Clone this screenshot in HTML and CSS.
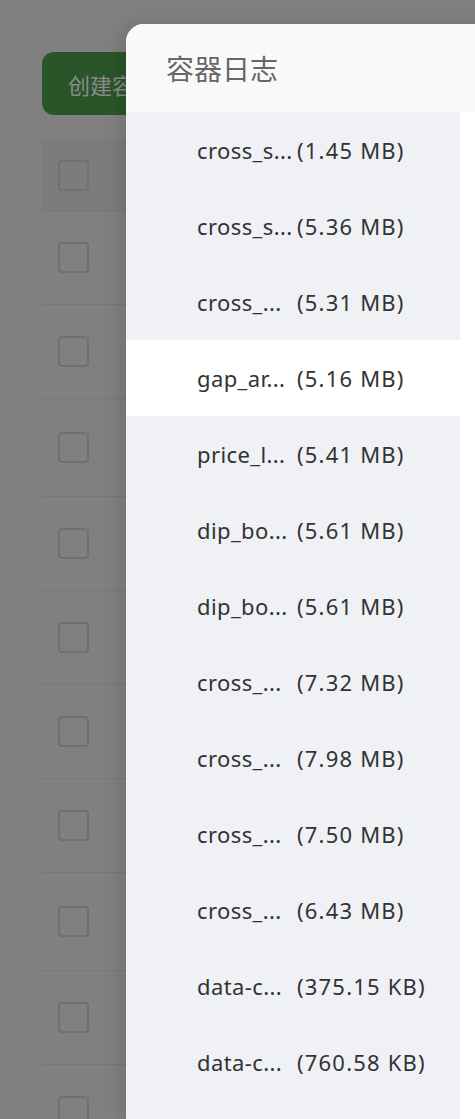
FILE: index.html
```html
<!DOCTYPE html>
<html lang="zh">
<head>
<meta charset="utf-8">
<link rel="stylesheet" href="styles.css">
</head>
<body>
<div class="page">
  <div class="toolbar">
    <button class="btn-create">创建容器</button>
  </div>
  <div class="table">
    <div class="trow thead"><span class="cb"></span></div>
    <div class="trow"><span class="cb"></span></div>
    <div class="trow"><span class="cb"></span></div>
    <div class="trow tall"><span class="cb"></span></div>
    <div class="trow"><span class="cb"></span></div>
    <div class="trow"><span class="cb"></span></div>
    <div class="trow"><span class="cb"></span></div>
    <div class="trow"><span class="cb"></span></div>
    <div class="trow tall"><span class="cb"></span></div>
    <div class="trow"><span class="cb"></span></div>
    <div class="trow"><span class="cb"></span></div>
  </div>
</div>
<div class="drawer">
  <div class="drawer-head">容器日志</div>
  <ul class="log-list">
    <li class="log-item"><span class="name">cross_s...</span><span class="size">(1.45 MB)</span></li>
    <li class="log-item"><span class="name">cross_s...</span><span class="size">(5.36 MB)</span></li>
    <li class="log-item"><span class="name">cross_...</span><span class="size">(5.31 MB)</span></li>
    <li class="log-item active"><span class="name">gap_ar...</span><span class="size">(5.16 MB)</span></li>
    <li class="log-item"><span class="name">price_l...</span><span class="size">(5.41 MB)</span></li>
    <li class="log-item"><span class="name">dip_bo...</span><span class="size">(5.61 MB)</span></li>
    <li class="log-item"><span class="name">dip_bo...</span><span class="size">(5.61 MB)</span></li>
    <li class="log-item"><span class="name">cross_...</span><span class="size">(7.32 MB)</span></li>
    <li class="log-item"><span class="name">cross_...</span><span class="size">(7.98 MB)</span></li>
    <li class="log-item"><span class="name">cross_...</span><span class="size">(7.50 MB)</span></li>
    <li class="log-item"><span class="name">cross_...</span><span class="size">(6.43 MB)</span></li>
    <li class="log-item"><span class="name">data-c...</span><span class="size">(375.15 KB)</span></li>
    <li class="log-item"><span class="name">data-c...</span><span class="size">(760.58 KB)</span></li>
  </ul>
</div>
</body>
</html>
```

FILE: styles.css
```css
html, body {
  margin: 0;
  padding: 0;
}
body {
  width: 475px;
  height: 1119px;
  overflow: hidden;
  background: #808080;
  font-family: "Noto Sans", "Noto Sans CJK SC", sans-serif;
}
.page {
  padding: 52px 0 0 42px;
}
.toolbar {
  display: flex;
}
.btn-create {
  height: 63px;
  padding: 0 26px;
  border: none;
  border-radius: 12px;
  background: #2a5529;
  color: #8a8a8a;
  font-family: "Noto Sans CJK SC", sans-serif;
  font-size: 22px;
}
.table {
  margin-top: 25px;
  display: flex;
  flex-direction: column;
}
.trow {
  height: 93px;
  border-bottom: 1px solid #76767b;
  display: flex;
  align-items: center;
  padding-left: 16px;
}
.trow.thead {
  height: 70px;
  background: #7c7c7d;
}
.trow.tall {
  height: 97px;
}
.cb {
  width: 27px;
  height: 27px;
  border: 2px solid #6f6f74;
  border-radius: 4px;
}
.drawer {
  position: fixed;
  left: 126px;
  top: 24px;
  right: -40px;
  bottom: 0;
  background: #ffffff;
  border-top-left-radius: 18px;
  overflow: hidden;
  box-shadow: -6px 0 18px rgba(0, 0, 0, 0.12);
}
.drawer-head {
  height: 88px;
  display: flex;
  align-items: center;
  padding-left: 40px;
  background: #f9f9f9;
  color: #666666;
  font-family: "Noto Sans CJK SC", sans-serif;
  font-size: 28px;
}
.log-list {
  list-style: none;
  margin: 0;
  padding: 0;
  width: 334px;
  height: 1007px;
  background: #f0f1f5;
}
.log-item {
  height: 76px;
  display: flex;
  align-items: center;
  padding-left: 71px;
  color: #333333;
  font-size: 22px;
  letter-spacing: 1.2px;
  white-space: nowrap;
}
.log-item.active {
  background: #ffffff;
}
.name {
  width: 100px;
  flex: none;
  letter-spacing: 0.4px;
}
.size {
  flex: none;
}
```
